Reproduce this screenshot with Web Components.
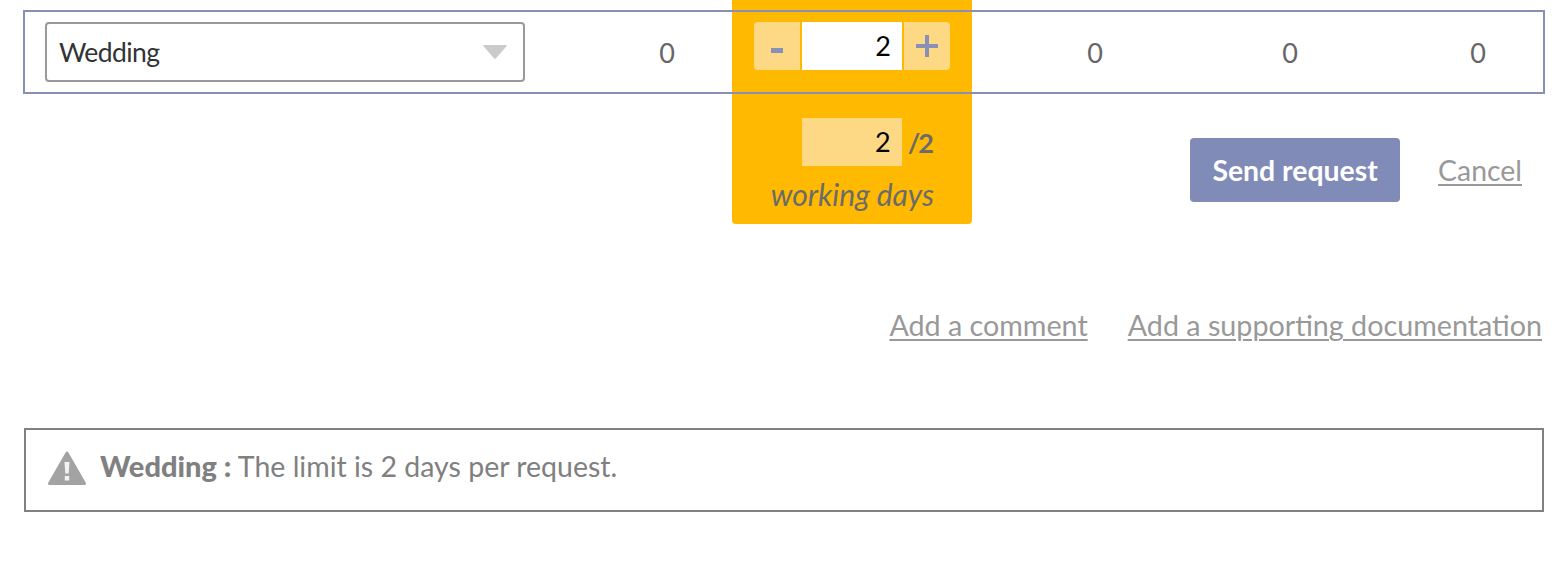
<!DOCTYPE html>
<html lang="en"><head><meta charset="utf-8"><title>Request</title>
<style>
html,body{margin:0;background:#fff}
body{font-family:Lato,"Noto Sans",sans-serif;font-size:27px;color:#666;width:1564px;height:562px;overflow:hidden}
</style></head><body>
<request-page></request-page>
<script>
function el(name,html){customElements.define(name,class extends HTMLElement{constructor(){super();this.attachShadow({mode:'open'}).innerHTML=html}})}
el('leave-select',`<style>
:host{display:flex;align-items:center;justify-content:space-between;box-sizing:border-box;width:480px;height:60px;border:2px solid #999;border-radius:4px;padding:0 16px 0 12px;background:#fff;color:#333}
.t{font-size:26.500px;letter-spacing:-.6px}
svg{display:block;width:24px;height:14px}
</style><span class="t"><slot></slot></span><svg viewBox="0 0 24 14"><path d="M1 0H23Q24.500 0 23.500 1.200L13 13.200Q12 14.200 11 13.200L.5 1.200Q-.5 0 1 0Z" fill="#cbcbcb"/></svg>`);
el('day-stepper',`<style>
:host{display:flex;gap:2px;height:48px;align-self:start;margin:10px 0 0 22px}
.b{width:46px;box-sizing:border-box;background:#fed985;display:flex;align-items:center;justify-content:center}
.b svg{display:block}
.m{border-radius:4px 0 0 4px;padding-top:9px}
.p{border-radius:0 4px 4px 0}
.v{width:100px;box-sizing:border-box;background:#fff;color:#000;text-align:right;padding-right:11px;line-height:48px;font-size:27px}
</style><div class="b m"><svg width="12" height="5"><rect width="12" height="5" fill="#8890b8"/></svg></div><div class="v"><slot></slot></div><div class="b p"><svg width="22" height="22"><path d="M0 9H22V13H0ZM9 0H13V22H9Z" fill="#8890b8"/></svg></div>`);
el('table-row',`<style>
:host{display:grid;grid-template-columns:577px 130px 240px 246px 144px 1fr;box-sizing:border-box;height:84px;border:2px solid #8890b5;align-items:center;text-align:center;margin:10px 19px 0 23px;grid-column:1/-1;grid-row:1;z-index:1;font-size:27px;color:#666}
::slotted(leave-select){margin-left:20px}
::slotted(.last){padding-left:51px}
</style><slot></slot>`);
el('yellow-col',`<style>
:host{display:flex;flex-direction:column;align-items:flex-end;box-sizing:border-box;grid-column:2;grid-row:1/3;height:224px;background:#ffb900;border-radius:0 0 4px 4px;padding:118px 38px 0 0}
.r{display:flex;align-items:center;gap:6px}
.v{width:100px;height:48px;line-height:48px;box-sizing:border-box;background:#fed985;color:#000;text-align:right;padding-right:11px;font-size:27px}
.o{font-weight:700;font-size:27px;color:#6b6b6b}
.o i{font-style:normal;letter-spacing:-2px}
.w{font-style:italic;font-size:30px;color:#6b6b6b;margin-top:9px;line-height:38px}
</style><div class="r"><div class="v">2</div><span class="o"><i>/</i>2</span></div><div class="w">working days</div>`);
el('action-bar',`<style>
:host{display:flex;align-items:center;gap:38px;grid-column:3;grid-row:2;justify-self:end;align-self:start;margin:44px 42px 0 0}
.b{box-sizing:border-box;width:210px;height:64px;background:#808bb8;color:#fff;border-radius:4px;display:flex;align-items:center;justify-content:center;font-weight:700;font-size:28.400px}
a{color:#999;text-decoration:underline;text-decoration-thickness:2px;text-underline-offset:3px;font-size:28.400px}
</style><div class="b">Send request</div><a>Cancel</a>`);
el('link-row',`<style>
:host{display:flex;justify-content:flex-end;gap:40px;padding-right:22px;margin-top:81px;font-size:28.700px;line-height:40px}
a{color:#999;text-decoration:underline;text-decoration-thickness:2px;text-underline-offset:3px}
</style><a>Add a comment</a><a>Add a supporting documentation</a>`);
el('notice-box',`<style>
:host{display:flex;align-items:center;box-sizing:border-box;height:84px;margin:83px 20px 0 24px;border:2px solid #808080;padding:0 21px 0 22px;font-size:28.500px;color:#808080}
svg{display:block;margin:0 14px 4px 0;width:38px;height:34px;flex:none}
span{margin-bottom:10px}
b{font-weight:900;font-size:29px}
</style><svg viewBox="0 0 38 34"><path d="M19 2 36.500 32.500H1.500Z" fill="#a3a3a3" stroke="#a3a3a3" stroke-linejoin="round" stroke-width="3"/><path d="M16.500 11h5l-.8 11.500h-3.400ZM16.800 25h4.400v4.400h-4.400Z" fill="#f2f2f2"/></svg><span><b>Wedding :</b> The limit is 2 days per request.</span>`);
el('request-page',`<style>
:host{display:block}
.g{display:grid;grid-template-columns:732px 240px 1fr;grid-template-rows:94px 130px}
</style><div class="g"><yellow-col></yellow-col>
<table-row><leave-select>Wedding</leave-select><span>0</span><day-stepper>2</day-stepper><span>0</span><span>0</span><span class="last">0</span></table-row>
<action-bar></action-bar></div><link-row></link-row><notice-box></notice-box>`);
</script></body></html>
